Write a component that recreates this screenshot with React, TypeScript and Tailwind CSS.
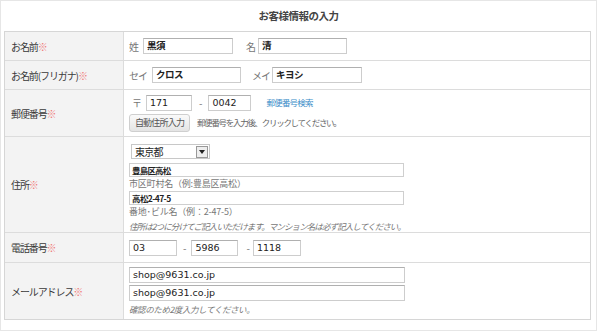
import React from 'react'

const font = { fontFamily: '"Noto Sans CJK JP", "Noto Sans", sans-serif' }
const latin = { fontFamily: '"DejaVu Sans", "Noto Sans CJK JP", sans-serif' }

function Req() {
  return <span className="text-[#f07878]">※</span>
}

function Field({ value, w, bold }: { value: string; w: string; bold?: boolean }) {
  return (
    <div
      className={`${w} h-[16px] border border-[#cdcdcd] border-t-[#b0b0b0] bg-white px-[3px] text-[9.5px] leading-[14px] text-[#222] ${bold ? 'font-semibold tracking-[-0.5px]' : ''}`}
      style={latin}
    >
      {value}
    </div>
  )
}

function Row({ label, h, top, children }: { label: React.ReactNode; h: string; top?: boolean; children: React.ReactNode }) {
  return (
    <div className={`flex ${h} border-b border-[#dcdcdc] last:border-b-0`}>
      <div className="w-[119px] shrink-0 flex items-center pl-[6px] bg-[#f3f3f3] border-r border-[#dcdcdc] text-[10px] tracking-[-1.1px] text-[#3a3a3a]">
        {label}
      </div>
      <div className={`flex-1 flex flex-col pl-[5px] ${top ? 'justify-start' : 'justify-center'}`}>{children}</div>
    </div>
  )
}

export default function App() {
  return (
    <div className="w-[600px] h-[332px] bg-white" style={font}>
      <div className="w-[597px] h-[331px] border border-[#e6e6e6] flex flex-col">
        <div className="h-[30px] flex items-center justify-center text-[10.5px] tracking-[-0.5px] font-bold text-[#444]">
          お客様情報の入力
        </div>
        <div className="ml-[3px] w-[587px] border border-[#d6d6d6] flex flex-col">
          <Row label={<>お名前<Req /></>} h="h-[29px]">
            <div className="flex items-center text-[10px] text-[#777]">
              <span className="mr-[4px]">姓</span>
              <Field value="黒須" w="w-[90px]" bold />
              <span className="ml-[13px] mr-[2px]">名</span>
              <Field value="清" w="w-[89px]" bold />
            </div>
          </Row>
          <Row label={<>お名前(フリガナ)<Req /></>} h="h-[29px]">
            <div className="flex items-center text-[10px] tracking-[-1px] text-[#777]">
              <span className="mr-[5px]">セイ</span>
              <Field value="クロス" w="w-[89px]" bold />
              <span className="ml-[11px] mr-[2px]">メイ</span>
              <Field value="キヨシ" w="w-[90px]" bold />
            </div>
          </Row>
          <Row label={<>郵便番号<Req /></>} h="h-[47px]">
            <div className="flex items-center text-[10px] text-[#777]">
              <span className="ml-[3px] mr-[4px]">〒</span>
              <Field value="171" w="w-[46px]" />
              <span className="ml-[7px] mr-[6px]">-</span>
              <Field value="0042" w="w-[43px]" />
              <span className="ml-[15px] text-[8.5px] tracking-[-0.8px] text-[#3a8cc8]">郵便番号検索</span>
            </div>
            <div className="flex items-center mt-[3px] text-[8.5px] tracking-[-1.3px] text-[#666]">
              <div className="w-[61px] h-[18px] rounded-[3px] border border-[#cfcfcf] bg-gradient-to-b from-[#fafafa] to-[#e4e4e4] flex items-center justify-center text-[9px] tracking-[-0.8px] text-[#555]">
                自動住所入力
              </div>
              <span className="ml-[7px]">郵便番号を入力後、クリックしてください。</span>
            </div>
          </Row>
          <Row label={<>住所<Req /></>} h="h-[96px]" top>
            <div className="flex items-center mt-[7px]">
              <div className="ml-[2px] w-[79px] h-[15px] border border-[#c8c8c8] bg-white flex items-center justify-between text-[10px] tracking-[-0.8px] leading-none text-[#222]">
                <span className="pl-[3px]">東京都</span>
                <span className="w-[12px] h-[12px] mr-[1px] border border-[#999] bg-[#eee] flex items-center justify-center">
                  <svg width="6" height="4" viewBox="0 0 6 4">
                    <path d="M0 0h6L3 4z" fill="#222" />
                  </svg>
                </span>
              </div>
            </div>
            <div className="mt-[4px]">
              <div className="w-[275px] h-[14px] border border-[#cfcfcf] bg-white px-[2px] text-[8.5px] tracking-[-0.8px] font-bold leading-[12px] text-[#222]">
                豊島区高松
              </div>
            </div>
            <div className="text-[9px] tracking-[-0.2px] text-[#777] leading-[12px] mt-[1px]">市区町村名（例:豊島区高松）</div>
            <div className="mt-[1px]">
              <div className="w-[275px] h-[14px] border border-[#cfcfcf] bg-white px-[2px] text-[8.5px] tracking-[-0.6px] font-bold leading-[12px] text-[#222]">
                高松2-47-5
              </div>
            </div>
            <div className="text-[9px] tracking-[-0.2px] text-[#777] leading-[12px] mt-[1px]">番地･ビル名（例：2-47-5）</div>
            <div className="text-[8.5px] tracking-[-0.9px] text-[#777] italic leading-[12px] mt-[2px]">
              住所は2つに分けてご記入いただけます。マンション名は必ず記入してください。
            </div>
          </Row>
          <Row label={<>電話番号<Req /></>} h="h-[30px]">
            <div className="flex items-center text-[10px] text-[#777]">
              <Field value="03" w="w-[48px]" />
              <span className="ml-[6px] mr-[5px]">-</span>
              <Field value="5986" w="w-[47px]" />
              <span className="ml-[8px] mr-[3px]">-</span>
              <Field value="1118" w="w-[48px]" />
            </div>
          </Row>
          <Row label={<>メールアドレス<Req /></>} h="h-[56px]" top>
            <div className="mt-[4px]">
              <Field value="shop@9631.co.jp" w="w-[276px]" />
            </div>
            <div className="mt-[2px]">
              <Field value="shop@9631.co.jp" w="w-[276px]" />
            </div>
            <div className="text-[8.5px] tracking-[-0.4px] text-[#777] italic leading-[12px] mt-[2px]">確認のため2度入力してください。</div>
          </Row>
        </div>
      </div>
    </div>
  )
}
